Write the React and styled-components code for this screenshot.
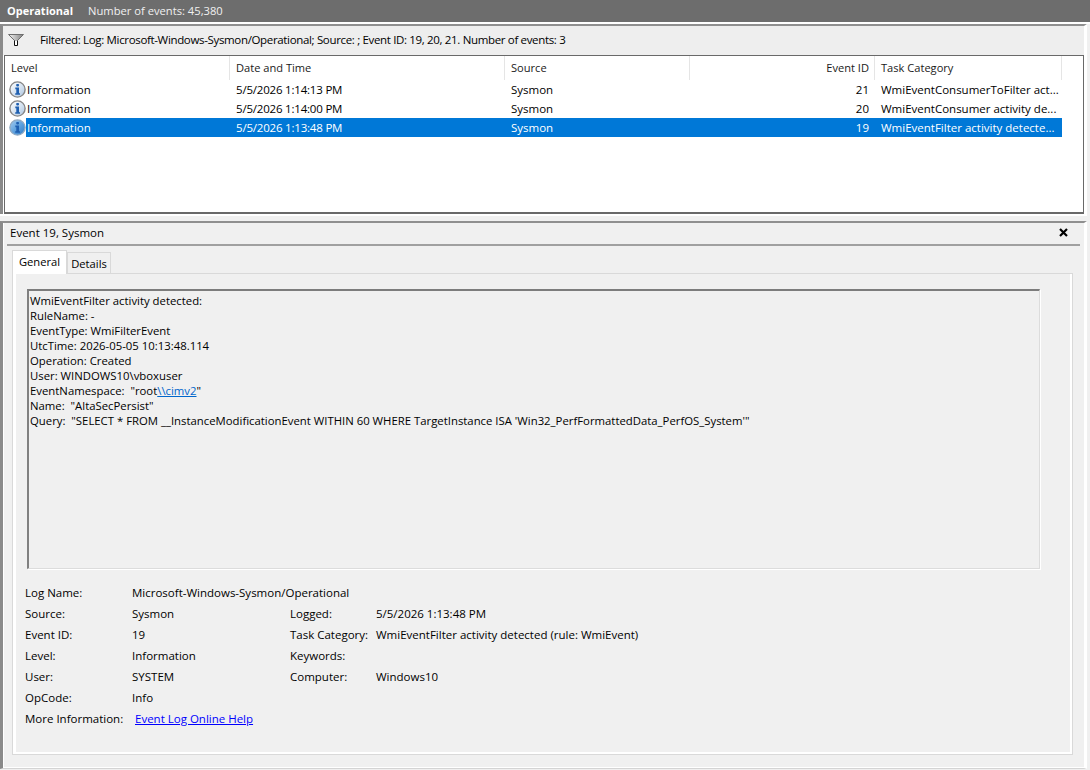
import React from "react"
import styled, { createGlobalStyle } from "styled-components"

const GlobalStyle = createGlobalStyle`
  html, body {
    margin: 0;
    padding: 0;
    background: #f0f0f0;
  }
  body {
    font-family: "Open Sans", "Noto Sans", sans-serif;
    font-size: 11.5px;
    color: #000;
    overflow: hidden;
  }
`

const Page = styled.div`
  width: 1090px;
  height: 770px;
  display: flex;
  flex-direction: column;
  overflow: hidden;
  background: #f0f0f0;
`

const TitleBar = styled.div`
  flex: none;
  height: 20px;
  display: flex;
  align-items: center;
  gap: 15px;
  padding: 0 0 2px 7px;
  background: #6d6d6d;
  color: #fff;
  border-bottom: 2px solid #fff;
`

const TitleName = styled.span`
  font-weight: 700;
  font-size: 11px;
`

const TitleCount = styled.span`
  color: #f0f0f0;
  font-size: 11.2px;
`

const Pane = styled.section`
  flex: none;
  display: flex;
  flex-direction: column;
  margin-right: 3px;
  border-top: 2px solid #8f8f8f;
  border-left: 3px solid #8a8a8a;
  border-right: 3px solid #fff;
  box-shadow: inset 1px 0 0 #fff;
`

const FilterBar = styled.div`
  height: 27px;
  display: flex;
  align-items: center;
  padding: 0 0 2px 5px;
  gap: 16px;
  background: #eeeeee;
  letter-spacing: -0.34px;
`

const ListBox = styled.div`
  height: 156px;
  margin-left: 1px;
  background: #fff;
  border: 1px solid #696969;
  border-bottom-width: 2px;
`

const ListRow = styled.div`
  display: grid;
  grid-template-columns: 225px 275px 185px 185px 187px;
  height: ${(p) => (p.$header ? "24px" : "19px")};
  align-items: center;
  width: 1057px;
`

const HeadCell = styled.div`
  height: 100%;
  display: flex;
  align-items: center;
  justify-content: ${(p) => (p.$right ? "flex-end" : "flex-start")};
  padding: ${(p) => (p.$right ? "0 5px 2px 0" : "0 0 2px 6px")};
  box-sizing: border-box;
  border-right: 1px solid #e5e5e5;
  color: #1a1a1a;
  font-size: 11.1px;
`

const Cell = styled.div`
  height: 100%;
  display: flex;
  align-items: center;
  justify-content: ${(p) => (p.$right ? "flex-end" : "flex-start")};
  padding: ${(p) => (p.$right ? "0 6px 0 0" : "0 0 0 6px")};
  box-sizing: border-box;
  white-space: nowrap;
  overflow: hidden;
  letter-spacing: ${(p) => (p.$tight ? "-0.2px" : "0")};
  color: ${(p) => (p.$selected ? "#fff" : "#000")};
  background: ${(p) => (p.$selected ? "#0078d7" : "transparent")};
`

const LevelCell = styled.div`
  height: 100%;
  display: flex;
  align-items: center;
  padding-left: 4px;
`

const LevelText = styled.span`
  flex: 1;
  height: 100%;
  display: flex;
  align-items: center;
  padding-left: 1px;
  color: ${(p) => (p.$selected ? "#fff" : "#000")};
  background: ${(p) => (p.$selected ? "#0078d7" : "transparent")};
`

const Splitter = styled.div`
  flex: none;
  height: 5px;
  margin-right: 3px;
  background: #f0f0f0;
  border-top: 2px solid #fff;
`

const DetailPane = styled(Pane)`
  flex: 1;
  min-height: 0;
  margin-bottom: 1px;
  border-bottom: 1px solid #d4d4d4;
  box-shadow: inset 1px 0 0 #fff, inset 0 -1px 0 #fff;
`

const DetailHead = styled.div`
  height: 19px;
  display: flex;
  align-items: center;
  justify-content: space-between;
  margin: 0 4px;
  padding: 0 12px 2px 3px;
  border-bottom: 2px solid #a0a0a0;
`

const CloseIcon = styled.svg`
  width: 9px;
  height: 9px;
  display: block;
`

const TabStrip = styled.div`
  height: 27px;
  display: flex;
  align-items: flex-end;
  padding-left: 9px;
  position: relative;
  z-index: 1;
  font-size: 11.2px;
`

const Tab = styled.div`
  box-sizing: border-box;
  width: ${(p) => p.$w}px;
  height: ${(p) => (p.$active ? "24px" : "21px")};
  display: flex;
  align-items: center;
  justify-content: center;
  padding-bottom: ${(p) => (p.$active ? "3px" : "0")};
  border: 1px solid #d9d9d9;
  border-bottom: none;
  background: ${(p) => (p.$active ? "#fff" : "#f0f0f0")};
  margin-bottom: ${(p) => (p.$active ? "-1px" : "0")};
`

const TabBody = styled.div`
  box-sizing: border-box;
  height: 482px;
  width: 1061px;
  margin-left: 9px;
  padding: 15px 32px 0 14px;
  border: 1px solid #d9d9d9;
  box-shadow: inset 3px 0 0 #fff, inset -2px 0 0 #fff, inset 0 -2px 0 #fff;
  background: #f0f0f0;
`

const MessageBox = styled.pre`
  box-sizing: border-box;
  height: 280px;
  margin: 0;
  padding: 2px 0 0 1px;
  font: inherit;
  font-size: 11.35px;
  line-height: 15px;
  white-space: pre;
  border-top: 2px solid #7c7c7c;
  border-left: 2px solid #808080;
  border-right: 1px solid #dcdcdc;
  border-bottom: 1px solid #dcdcdc;
  box-shadow: 1px 1px 0 #fff;
  background: #f0f0f0;
`

const MessageLink = styled.a`
  color: #0066cc;
  text-decoration: underline;
`

const Fields = styled.div`
  display: grid;
  grid-template-columns: 107px 158px 86px 1fr;
  grid-auto-rows: 21px;
  align-items: center;
  margin: 13px 0 0 -2px;
`

const WideValue = styled.div`
  grid-column: 2 / 5;
`

const HelpLink = styled.a`
  color: #0000ff;
  text-decoration: underline;
  margin-left: 3px;
`

const FunnelIcon = () => (
  <svg width="16" height="12" viewBox="0 0 16 12">
    <defs>
      <linearGradient id="funnelFill" x1="0" x2="1" y1="0" y2="0">
        <stop offset="0" stopColor="#f5f5f5" />
        <stop offset="1" stopColor="#7d7d7d" />
      </linearGradient>
    </defs>
    <path d="M0.5 0.5H15.5L9.5 6.5H6.5Z" fill="url(#funnelFill)" stroke="#6e6e6e" />
    <path d="M6.5 6.5V11.5H9.5V6.5" fill="#fff" stroke="#111" />
  </svg>
)

const InfoIcon = ({ selected }) => {
  const id = selected ? "infoSel" : "infoRest"
  return (
    <svg width="17" height="17" viewBox="0 0 17 17" style={{ flex: "none" }}>
      <defs>
        <linearGradient id={id} x1="0" x2="1" y1="0" y2="1">
          <stop offset="0" stopColor={selected ? "#a5cdf0" : "#ffffff"} />
          <stop offset="0.55" stopColor={selected ? "#5b9fdd" : "#d5e2f0"} />
          <stop offset="1" stopColor={selected ? "#2f7ac4" : "#a9c3df"} />
        </linearGradient>
      </defs>
      <circle
        cx="8.5"
        cy="8.5"
        r="7.6"
        fill={`url(#${id})`}
        stroke={selected ? "#8fa9c2" : "#868686"}
        strokeWidth="1.4"
      />
      <rect x="7.2" y="3" width="2.8" height="2.4" rx="0.8" fill="#1f5fb0" />
      <path d="M6.3 6.6H10V12.2H11V13.8H6.2V12.2H7.3V8.2H6.3Z" fill="#1f5fb0" />
    </svg>
  )
}

const columns = [
  { name: "Level" },
  { name: "Date and Time" },
  { name: "Source" },
  { name: "Event ID", right: true },
  { name: "Task Category" },
]

const events = [
  { time: "5/5/2026 1:14:13 PM", id: 21, task: "WmiEventConsumerToFilter act..." },
  { time: "5/5/2026 1:14:00 PM", id: 20, task: "WmiEventConsumer activity de..." },
  { time: "5/5/2026 1:13:48 PM", id: 19, task: "WmiEventFilter activity detecte...", selected: true },
]

const App = () => {
  return (
    <Page>
      <GlobalStyle />
      <TitleBar>
        <TitleName>Operational</TitleName>
        <TitleCount>Number of events: 45,380</TitleCount>
      </TitleBar>
      <Pane>
        <FilterBar>
          <FunnelIcon />
          <span>
            Filtered: Log: Microsoft-Windows-Sysmon/Operational; Source: ; Event ID: 19, 20, 21. Number of events: 3
          </span>
        </FilterBar>
        <ListBox>
          <ListRow $header>
            {columns.map((c) => (
              <HeadCell key={c.name} $right={c.right}>
                {c.name}
              </HeadCell>
            ))}
          </ListRow>
          {events.map((e) => (
            <ListRow key={e.id}>
              <LevelCell>
                <InfoIcon selected={e.selected} />
                <LevelText $selected={e.selected}>Information</LevelText>
              </LevelCell>
              <Cell $selected={e.selected} $tight>{e.time}</Cell>
              <Cell $selected={e.selected}>Sysmon</Cell>
              <Cell $selected={e.selected} $right>
                {e.id}
              </Cell>
              <Cell $selected={e.selected}>{e.task}</Cell>
            </ListRow>
          ))}
        </ListBox>
      </Pane>
      <Splitter />
      <DetailPane>
        <DetailHead>
          <span>Event 19, Sysmon</span>
          <CloseIcon viewBox="0 0 9 9">
            <path d="M1 1L8 8M8 1L1 8" stroke="#000" strokeWidth="2.2" />
          </CloseIcon>
        </DetailHead>
        <TabStrip>
          <Tab $active $w={55}>General</Tab>
          <Tab $w={44}>Details</Tab>
        </TabStrip>
        <TabBody>
          <MessageBox>
            {`WmiEventFilter activity detected:
RuleName: -
EventType: WmiFilterEvent
UtcTime: 2026-05-05 10:13:48.114
Operation: Created
User: WINDOWS10\\vboxuser
EventNamespace:  "root`}
            <MessageLink>{`\\\\cimv2`}</MessageLink>
            {`"
Name:  "AltaSecPersist"
Query:  "SELECT * FROM __InstanceModificationEvent WITHIN 60 WHERE TargetInstance ISA 'Win32_PerfFormattedData_PerfOS_System'"`}
          </MessageBox>
          <Fields>
            <div>Log Name:</div>
            <WideValue>Microsoft-Windows-Sysmon/Operational</WideValue>
            <div>Source:</div>
            <div>Sysmon</div>
            <div>Logged:</div>
            <div>5/5/2026 1:13:48 PM</div>
            <div>Event ID:</div>
            <div>19</div>
            <div>Task Category:</div>
            <div>WmiEventFilter activity detected (rule: WmiEvent)</div>
            <div>Level:</div>
            <div>Information</div>
            <div>Keywords:</div>
            <div />
            <div>User:</div>
            <div>SYSTEM</div>
            <div>Computer:</div>
            <div>Windows10</div>
            <div>OpCode:</div>
            <WideValue>Info</WideValue>
            <div>More Information:</div>
            <WideValue>
              <HelpLink>Event Log Online Help</HelpLink>
            </WideValue>
          </Fields>
        </TabBody>
      </DetailPane>
    </Page>
  )
}

export default App
